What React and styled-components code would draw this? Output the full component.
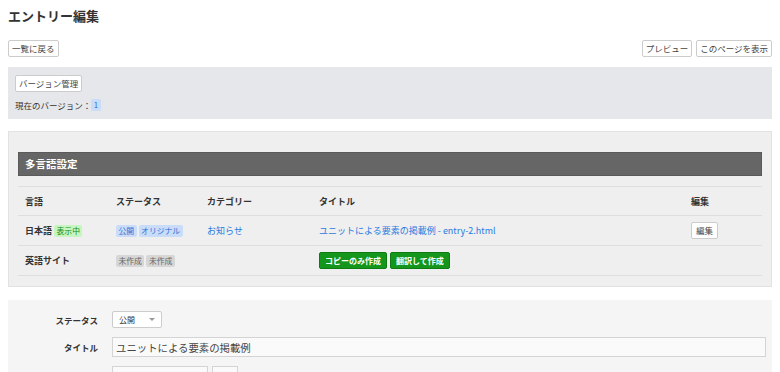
import styled, { createGlobalStyle } from "styled-components";

const GlobalStyle = createGlobalStyle`
  html, body {
    margin: 0;
    padding: 0;
    background: #fff;
  }
  body {
    font-family: "Noto Sans CJK JP", "Noto Sans", "Liberation Sans", sans-serif;
    color: #333;
    font-size: 11px;
  }
`;

const Page = styled.div`
  padding: 0 8px;
  width: 764px;
  height: 372px;
  overflow: hidden;
`;

const PageTitle = styled.h1`
  font-size: 13px;
  font-weight: bold;
  margin: 0;
  padding-top: 5px;
  line-height: 22px;
  color: #333;
`;

const Toolbar = styled.div`
  display: flex;
  justify-content: space-between;
  margin-top: 13px;
`;

const ButtonGroup = styled.div`
  display: flex;
  gap: 4px;
`;

const Button = styled.button`
  font-family: inherit;
  font-size: 8.5px;
  height: 17px;
  padding: 0 3px;
  min-width: ${(p) => p.$min || "0"};
  background: #fff;
  color: #444;
  border: 1px solid #ccc;
  border-radius: 2px;
  line-height: 15px;
  cursor: pointer;
`;

const VersionPanel = styled.div`
  margin-top: 10px;
  background: #e6e7ea;
  padding: 7px 7px 9px;
  height: 36px;
`;

const CurrentVersion = styled.div`
  margin-top: 7px;
  font-size: 8.5px;
  color: #333;
  display: flex;
  align-items: center;
`;

const Tag = styled.span`
  display: inline-block;
  font-size: 7.8px;
  line-height: 12px;
  padding: 0 2.5px;
  border-radius: 2px;
  background: ${(p) =>
    p.$tone === "green" ? "#c6f5c0" : p.$tone === "gray" ? "#d6d6d6" : "#c9ddfa"};
  color: ${(p) =>
    p.$tone === "green" ? "#178a17" : p.$tone === "gray" ? "#666" : "#2f6fd0"};
  margin-right: 2px;
  font-weight: normal;
`;

const LangPanel = styled.div`
  margin-top: 12px;
  background: #efefef;
  border: 1px solid #e2e2e2;
  padding: 20px 9px 10px;
`;

const DarkBar = styled.div`
  background: #666;
  border: 1px solid #5a5a5a;
  color: #fff;
  font-weight: bold;
  font-size: 10.5px;
  height: 22px;
  line-height: 22px;
  padding: 0 6px;
`;

const Table = styled.table`
  width: 100%;
  margin-top: 10px;
  border-collapse: collapse;
  font-size: 9px;
`;

const Th = styled.th`
  text-align: left;
  font-weight: bold;
  height: 28px;
  padding: 0 7px;
  border-top: 1px solid #dedede;
  border-bottom: 1px solid #dedede;
  width: ${(p) => p.$w || "auto"};
`;

const Td = styled.td`
  height: 29px;
  padding: 0 7px;
  border-bottom: 1px solid #dedede;
  font-weight: ${(p) => (p.$bold ? "bold" : "normal")};
  white-space: nowrap;
`;

const Link = styled.a`
  color: #2b7ae0;
  text-decoration: none;
  font-size: 9px;
`;

const GreenButton = styled.button`
  font-family: inherit;
  font-size: 8px;
  height: 17px;
  padding: 0 5px;
  background: #13961b;
  color: #fff;
  border: 1px solid #0d7c13;
  border-radius: 2px;
  margin-right: 3px;
  font-weight: bold;
`;

const FormPanel = styled.div`
  margin-top: 13px;
  background: #f5f5f5;
  padding: 11px 6px 0 0;
  height: 80px;
`;

const FormRow = styled.div`
  display: grid;
  grid-template-columns: 90px 1fr;
  column-gap: 14px;
  align-items: center;
  margin-bottom: 9px;
`;

const Label = styled.div`
  text-align: right;
  font-weight: bold;
  font-size: 8.5px;
  color: #333;
`;

const Select = styled.div`
  width: 50px;
  height: 17px;
  box-sizing: border-box;
  background: #fff;
  border: 1px solid #ccc;
  border-radius: 2px;
  font-size: 8px;
  display: flex;
  align-items: center;
  justify-content: space-between;
  padding: 0 6px;
  color: #333;
`;

const Caret = styled.span`
  width: 0;
  height: 0;
  border-left: 3px solid transparent;
  border-right: 3px solid transparent;
  border-top: 3px solid #999;
`;

const Input = styled.div`
  height: 20px;
  box-sizing: border-box;
  background: #fafafa;
  border: 1px solid #d4d4d4;
  font-size: 10.4px;
  padding: 0 3px;
  display: flex;
  align-items: center;
  color: #444;
  width: ${(p) => p.$w || "auto"};
`;

const InlineGroup = styled.div`
  display: flex;
  gap: 4px;
`;

const App = () => {
  return (
    <>
      <GlobalStyle />
      <Page>
        <PageTitle>エントリー編集</PageTitle>
        <Toolbar>
          <Button>一覧に戻る</Button>
          <ButtonGroup>
            <Button>プレビュー</Button>
            <Button>このページを表示</Button>
          </ButtonGroup>
        </Toolbar>
        <VersionPanel>
          <Button>バージョン管理</Button>
          <CurrentVersion>
            現在のバージョン：<Tag>1</Tag>
          </CurrentVersion>
        </VersionPanel>
        <LangPanel>
          <DarkBar>多言語設定</DarkBar>
          <Table>
            <thead>
              <tr>
                <Th $w="77px">言語</Th>
                <Th $w="77px">ステータス</Th>
                <Th $w="98px">カテゴリー</Th>
                <Th>タイトル</Th>
                <Th $w="64px">編集</Th>
              </tr>
            </thead>
            <tbody>
              <tr>
                <Td $bold>
                  日本語 <Tag $tone="green">表示中</Tag>
                </Td>
                <Td>
                  <Tag>公開</Tag>
                  <Tag>オリジナル</Tag>
                </Td>
                <Td>
                  <Link>お知らせ</Link>
                </Td>
                <Td>
                  <Link>ユニットによる要素の掲載例 - entry-2.html</Link>
                </Td>
                <Td>
                  <Button $min="27px">編集</Button>
                </Td>
              </tr>
              <tr>
                <Td $bold>英語サイト</Td>
                <Td>
                  <Tag $tone="gray">未作成</Tag>
                  <Tag $tone="gray">未作成</Tag>
                </Td>
                <Td />
                <Td>
                  <GreenButton>コピーのみ作成</GreenButton>
                  <GreenButton>翻訳して作成</GreenButton>
                </Td>
                <Td />
              </tr>
            </tbody>
          </Table>
        </LangPanel>
        <FormPanel>
          <FormRow>
            <Label>ステータス</Label>
            <Select>
              公開 <Caret />
            </Select>
          </FormRow>
          <FormRow>
            <Label>タイトル</Label>
            <Input>ユニットによる要素の掲載例</Input>
          </FormRow>
          <FormRow>
            <Label>カテゴリー</Label>
            <InlineGroup>
              <Input $w="96px" />
              <Input $w="26px" />
            </InlineGroup>
          </FormRow>
        </FormPanel>
      </Page>
    </>
  );
};

export default App;
